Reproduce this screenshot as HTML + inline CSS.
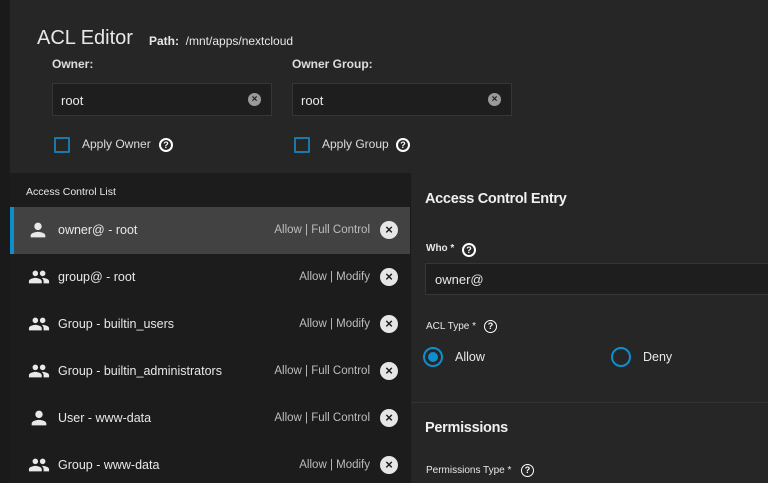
<!DOCTYPE html>
<html><head><meta charset="utf-8"><style>
*{box-sizing:border-box;margin:0;padding:0}
html,body{width:768px;height:483px;overflow:hidden}
body{background:#1a1a1a;font-family:"Liberation Sans",sans-serif;color:#e8e8e8;position:relative}
.abs{position:absolute}
.card{left:10px;top:0;width:758px;height:173px;background:#262626}
.input{background:#1e1e1e;border:1px solid #363636;height:33px;font-size:13px;padding:9px 8px;color:#e8e8e8}
.clr{position:absolute;right:10px;top:9px;width:13px;height:13px;border-radius:50%;background:#9a9a9a;color:#1e1e1e;font-size:10px;line-height:13px;text-align:center;font-weight:bold}
.cb{width:16px;height:16px;border:2px solid #1a79a8;border-radius:1px}
.q{width:14px;height:14px;border:2px solid #fff;border-radius:50%;font-size:9px;font-weight:bold;line-height:10px;text-align:center;color:#fff}
.list{left:10px;top:173px;width:400px;height:310px;background:#1c1c1c}
.row{position:absolute;left:0;width:400px;height:47px;font-size:12.5px}
.row .n{position:absolute;left:48px;top:16px;color:#e8e8e8}
.row .p{position:absolute;right:40px;top:17px;font-size:11.5px;color:#bdbdbd}
.row .x{position:absolute;right:12px;top:14px;width:18px;height:18px;border-radius:50%;background:#e6e6e6;color:#1c1c1c;font-size:13px;line-height:18px;text-align:center;font-weight:bold}
.row svg{position:absolute;left:18px;top:12px}
.right{left:411px;top:173px;width:357px;height:310px;background:#262626}
.lbl{font-size:10px;color:#e8e8e8}
</style></head><body>
<div class="abs card"></div>
<div class="abs" style="left:37px;top:27px;font-size:20px;color:#e8e8e8">ACL Editor</div>
<div class="abs" style="left:149px;top:34px;font-size:12px;color:#e8e8e8"><b>Path:</b>&nbsp; /mnt/apps/nextcloud</div>
<div class="abs" style="left:52px;top:57px;font-size:12px;font-weight:bold;color:#ddd">Owner:</div>
<div class="abs" style="left:292px;top:57px;font-size:12px;font-weight:bold;color:#ddd">Owner Group:</div>
<div class="abs input" style="left:52px;top:83px;width:220px">root<div class="clr">×</div></div>
<div class="abs input" style="left:292px;top:83px;width:220px">root<div class="clr">×</div></div>
<div class="abs cb" style="left:54px;top:137px"></div>
<div class="abs" style="left:82px;top:137px;font-size:12px;color:#ddd">Apply Owner</div>
<div class="abs q" style="left:159px;top:138px">?</div>
<div class="abs cb" style="left:294px;top:137px"></div>
<div class="abs" style="left:322px;top:137px;font-size:12px;color:#ddd">Apply Group</div>
<div class="abs q" style="left:396px;top:138px">?</div>

<div class="abs list">
<div class="abs" style="left:16px;top:13px;font-size:10.5px;color:#e8e8e8">Access Control List</div>
<div class="row" style="top:34px;background:#424242;border-left:4px solid #0d8fce">
<svg width="22" height="22" viewBox="0 0 24 24" style="left:13px"><path fill="#e8e8e8" d="M12 12c2.2 0 4-1.8 4-4s-1.8-4-4-4-4 1.8-4 4 1.8 4 4 4zm0 2c-2.7 0-8 1.3-8 4v2h16v-2c0-2.7-5.3-4-8-4z"/></svg>
<span class="n" style="left:44px">owner@ - root</span><span class="p">Allow | Full Control</span><span class="x">×</span></div>
<div class="row" style="top:81px"><svg width="22" height="22" viewBox="0 0 24 24"><path fill="#e8e8e8" d="M16 11c1.7 0 3-1.3 3-3s-1.3-3-3-3-3 1.3-3 3 1.3 3 3 3zm-8 0c1.7 0 3-1.3 3-3S9.7 5 8 5 5 6.3 5 8s1.3 3 3 3zm0 2c-2.3 0-7 1.2-7 3.5V19h14v-2.5c0-2.3-4.7-3.5-7-3.5zm8 0c-.3 0-.6 0-1 .1 1.2.8 2 2 2 3.4V19h6v-2.5c0-2.3-4.7-3.5-7-3.5z"/></svg><span class="n">group@ - root</span><span class="p">Allow | Modify</span><span class="x">×</span></div>
<div class="row" style="top:128px"><svg width="22" height="22" viewBox="0 0 24 24"><path fill="#e8e8e8" d="M16 11c1.7 0 3-1.3 3-3s-1.3-3-3-3-3 1.3-3 3 1.3 3 3 3zm-8 0c1.7 0 3-1.3 3-3S9.7 5 8 5 5 6.3 5 8s1.3 3 3 3zm0 2c-2.3 0-7 1.2-7 3.5V19h14v-2.5c0-2.300-4.7-3.5-7-3.5zm8 0c-.3 0-.6 0-1 .1 1.2.8 2 2 2 3.4V19h6v-2.5c0-2.3-4.7-3.5-7-3.5z"/></svg><span class="n">Group - builtin_users</span><span class="p">Allow | Modify</span><span class="x">×</span></div>
<div class="row" style="top:175px"><svg width="22" height="22" viewBox="0 0 24 24"><path fill="#e8e8e8" d="M16 11c1.7 0 3-1.3 3-3s-1.3-3-3-3-3 1.3-3 3 1.3 3 3 3zm-8 0c1.7 0 3-1.3 3-3S9.7 5 8 5 5 6.3 5 8s1.3 3 3 3zm0 2c-2.3 0-7 1.2-7 3.5V19h14v-2.5c0-2.3-4.7-3.5-7-3.5zm8 0c-.3 0-.6 0-1 .1 1.2.8 2 2 2 3.4V19h6v-2.5c0-2.3-4.7-3.5-7-3.5z"/></svg><span class="n">Group - builtin_administrators</span><span class="p">Allow | Full Control</span><span class="x">×</span></div>
<div class="row" style="top:222px"><svg width="22" height="22" viewBox="0 0 24 24" style="left:18px"><path fill="#e8e8e8" d="M12 12c2.2 0 4-1.8 4-4s-1.8-4-4-4-4 1.8-4 4 1.8 4 4 4zm0 2c-2.7 0-8 1.3-8 4v2h16v-2c0-2.7-5.3-4-8-4z"/></svg><span class="n">User - www-data</span><span class="p">Allow | Full Control</span><span class="x">×</span></div>
<div class="row" style="top:269px"><svg width="22" height="22" viewBox="0 0 24 24"><path fill="#e8e8e8" d="M16 11c1.7 0 3-1.3 3-3s-1.3-3-3-3-3 1.3-3 3 1.3 3 3 3zm-8 0c1.7 0 3-1.3 3-3S9.7 5 8 5 5 6.3 5 8s1.3 3 3 3zm0 2c-2.3 0-7 1.2-7 3.5V19h14v-2.5c0-2.3-4.7-3.5-7-3.5zm8 0c-.3 0-.6 0-1 .1 1.2.8 2 2 2 3.4V19h6v-2.5c0-2.3-4.7-3.5-7-3.5z"/></svg><span class="n">Group - www-data</span><span class="p">Allow | Modify</span><span class="x">×</span></div>
</div>

<div class="abs right"></div>
<div class="abs" style="left:425px;top:191px;font-size:14.5px;font-weight:bold;color:#f0f0f0;letter-spacing:-0.3px">Access Control Entry</div>
<div class="abs lbl" style="left:426px;top:243px;font-weight:bold">Who *</div>
<div class="abs q" style="left:462px;top:243px">?</div>
<div class="abs input" style="left:425px;top:263px;width:350px;height:32px;padding:8px 9px">owner@</div>
<div class="abs lbl" style="left:426px;top:321px">ACL Type *</div>
<div class="abs q" style="left:484px;top:320px;border-width:1.5px;width:13px;height:13px;line-height:10px">?</div>
<div class="abs" style="left:423px;top:347px;width:20px;height:20px;border:2px solid #0d8fce;border-radius:50%"><div style="margin:3px;width:10px;height:10px;border-radius:50%;background:#0d8fce"></div></div>
<div class="abs" style="left:455px;top:350px;font-size:12.5px">Allow</div>
<div class="abs" style="left:611px;top:347px;width:20px;height:20px;border:2px solid #0d8fce;border-radius:50%"></div>
<div class="abs" style="left:643px;top:350px;font-size:12.5px">Deny</div>
<div class="abs" style="left:411px;top:402px;width:357px;height:1px;background:#333"></div>
<div class="abs" style="left:425px;top:420px;font-size:14.5px;font-weight:bold;color:#f0f0f0;letter-spacing:-0.3px">Permissions</div>
<div class="abs lbl" style="left:426px;top:465px">Permissions Type *</div>
<div class="abs q" style="left:521px;top:464px;border-width:1.5px;width:13px;height:13px;line-height:10px">?</div>
</body></html>
